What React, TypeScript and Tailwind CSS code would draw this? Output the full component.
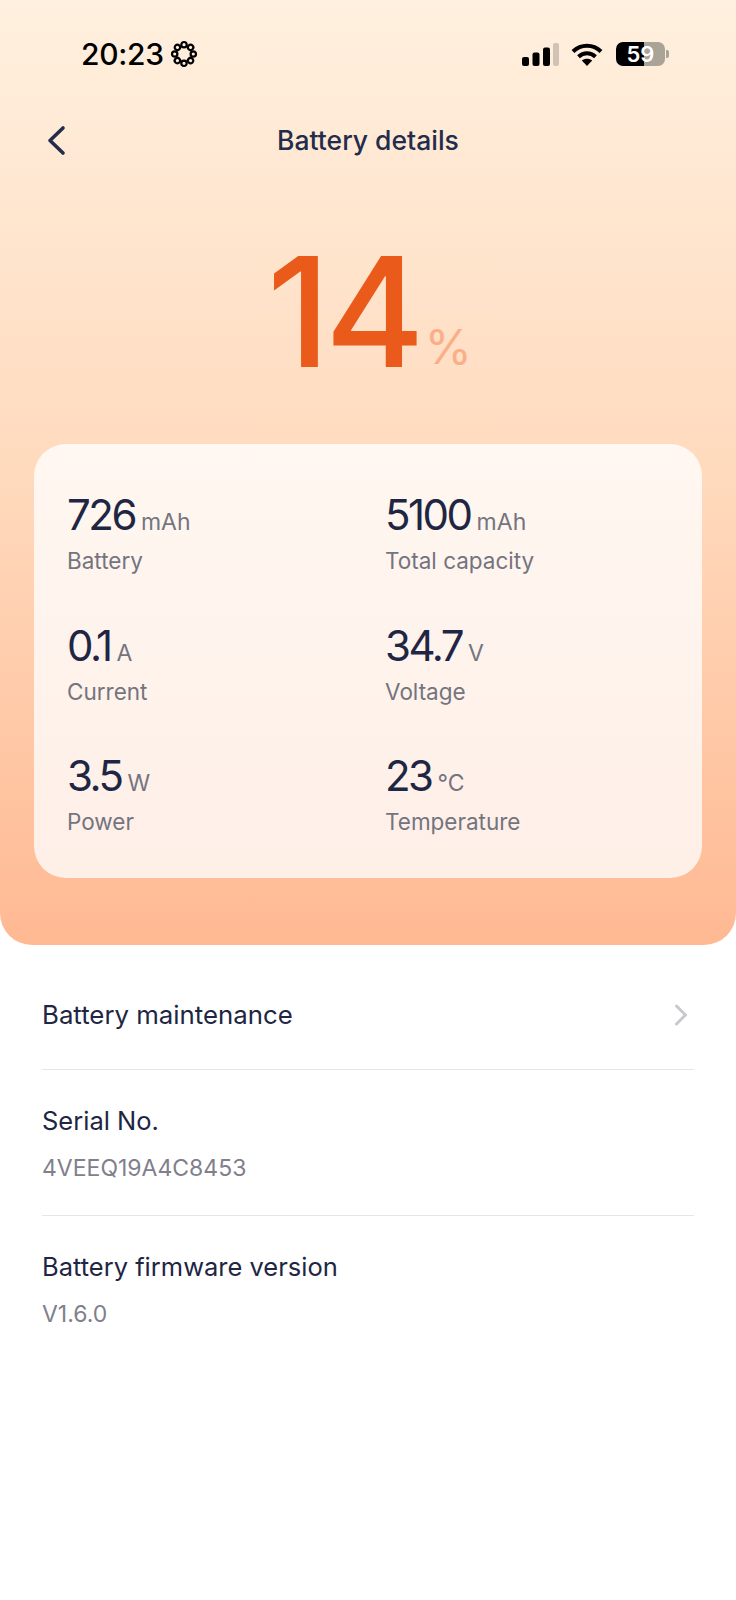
const stats = [
  { value: "726", unit: "mAh", label: "Battery" },
  { value: "5100", unit: "mAh", label: "Total capacity" },
  { value: "0.1", unit: "A", label: "Current" },
  { value: "34.7", unit: "V", label: "Voltage" },
  { value: "3.5", unit: "W", label: "Power" },
  { value: "23", unit: "°C", label: "Temperature" },
];

function FlowerIcon() {
  const petals = [0, 45, 90, 135, 180, 225, 270, 315];
  return (
    <svg width="28" height="28" viewBox="0 0 28 28" fill="none" stroke="#000" strokeWidth="2.2">
      {petals.map((a) => (
        <circle key={a} cx="14" cy="4.7" r="2.7" transform={`rotate(${a} 14 14)`} />
      ))}
    </svg>
  );
}

function SignalIcon() {
  return (
    <svg width="37" height="23" viewBox="0 0 37 23" className="block">
      <rect x="0" y="14" width="7" height="9" rx="2" fill="#000" />
      <rect x="10.5" y="9.5" width="7" height="13.5" rx="2" fill="#000" />
      <rect x="21" y="4.5" width="7" height="18.5" rx="2" fill="#000" />
      <rect x="31" y="0" width="6" height="23" rx="2" fill="#cfc3b5" />
    </svg>
  );
}

function WifiIcon() {
  return (
    <svg width="32" height="23" viewBox="0 0 32 23" fill="none" className="block">
      <path d="M2 8.5C10 0.8 22 0.8 30 8.5" stroke="#000" strokeWidth="4" />
      <path d="M7.5 13.8C12.5 9.2 19.5 9.2 24.5 13.8" stroke="#000" strokeWidth="4" />
      <path d="M16 23L10.8 17.6C13.8 15 18.2 15 21.2 17.6Z" fill="#000" />
    </svg>
  );
}

function BatteryIcon() {
  return (
    <div className="flex items-center gap-[1px]">
      <div className="flex items-center justify-center w-[49px] h-[24px] rounded-[7px] bg-[linear-gradient(90deg,#000_28px,#aaa397_28px)] text-white text-[22px] font-semibold leading-[24px]">
        59
      </div>
      <div className="w-[3px] h-[8px] rounded-r-[2px] bg-[#aaa397]" />
    </div>
  );
}

export default function App() {
  return (
    <div className="w-[736px] h-[1600px] bg-white font-['Inter',sans-serif] overflow-hidden">
      <div className="h-[945px] rounded-b-[32px] bg-gradient-to-b from-[#fff0df] via-[#ffdabd] via-50% to-[#ffb993] flex flex-col">
        {/* status bar */}
        <div className="flex items-center justify-between pt-[38px] pl-[81px] pr-[67px] h-[70px]">
          <div className="flex items-center gap-[6px]">
            <span className="text-[30px] font-medium leading-none text-black tracking-[-0.3px]">20:23</span>
            <FlowerIcon />
          </div>
          <div className="flex items-center">
            <SignalIcon />
            <div className="ml-[12px] mr-[13px]">
              <WifiIcon />
            </div>
            <BatteryIcon />
          </div>
        </div>

        {/* header */}
        <div className="relative flex items-center justify-center h-[60px] mt-[41px]">
          <svg
            width="22"
            height="32"
            viewBox="0 0 22 32"
            fill="none"
            stroke="#232c4b"
            strokeWidth="3.6"
            strokeLinecap="round"
            strokeLinejoin="round"
            className="absolute left-[46px] top-[14px]"
          >
            <path d="M17 3L4 15.5L17 28" />
          </svg>
          <span className="text-[26.5px] font-medium text-[#232c4b]">Battery details</span>
        </div>

        {/* percent */}
        <div className="flex items-end justify-center h-[242px] pl-[3px]">
          <span className="text-[152px] leading-none text-[#e95a1b] font-[450] tracking-[-5px] mb-[25px]">14</span>
          <span className="text-[48px] leading-none text-[#fbae88] mb-[42px] ml-[5px]">%</span>
        </div>

        {/* stats card */}
        <div className="mx-[34px] mt-[31px] h-[434px] rounded-[32px] bg-gradient-to-b from-[#fff7f1] to-[#feefe7] pl-[33px] pt-[48px] grid grid-cols-[318px_1fr] auto-rows-[130.5px]">
          {stats.map((s) => (
            <div key={s.label}>
              <div className="flex items-baseline h-[46px]">
                <span className="text-[42px] leading-[46px] text-[#1e2643] tracking-[-2.5px]">{s.value}</span>
                <span className="text-[23px] leading-none text-[#74747f] ml-[6px]">{s.unit}</span>
              </div>
              <div className="text-[22.5px] leading-[30px] text-[#74747f] mt-[8px]">{s.label}</div>
            </div>
          ))}
        </div>
      </div>

      {/* list */}
      <div className="mx-[42px]">
        <div className="flex items-center justify-between h-[125px] pt-[16px] border-b border-[#e6e6e8]">
          <span className="text-[25.8px] text-[#1e2643]">Battery maintenance</span>
          <svg width="16" height="24" viewBox="0 0 16 24" fill="none" stroke="#c8c9ce" strokeWidth="3" strokeLinecap="round" strokeLinejoin="round" className="mr-[5px]">
            <path d="M3.5 3L12.5 12L3.5 21" />
          </svg>
        </div>
        <div className="h-[146px] border-b border-[#e6e6e8] pt-[33px]">
          <div className="text-[25.5px] leading-[36px] text-[#1e2643]">Serial No.</div>
          <div className="text-[23px] leading-[32px] text-[#7f808c] mt-[13px]">4VEEQ19A4C8453</div>
        </div>
        <div className="pt-[33px]">
          <div className="text-[25.5px] leading-[36px] text-[#1e2643]">Battery firmware version</div>
          <div className="text-[23px] leading-[32px] text-[#7f808c] mt-[13px]">V1.6.0</div>
        </div>
      </div>
    </div>
  );
}
